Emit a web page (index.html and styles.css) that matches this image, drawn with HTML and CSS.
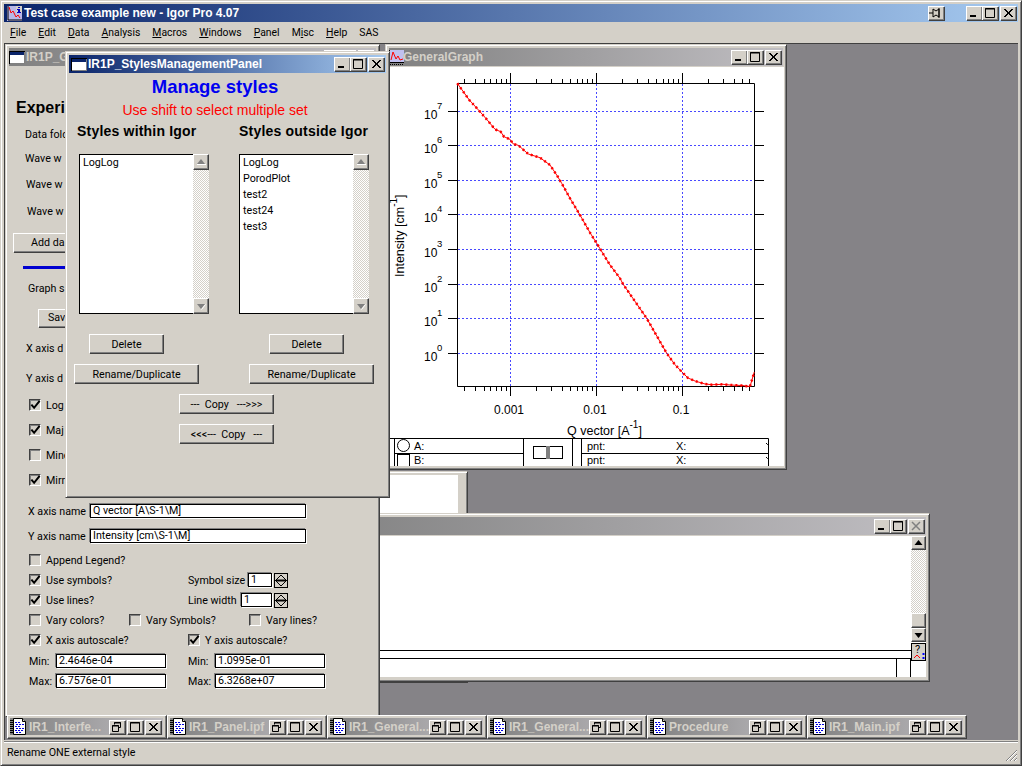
FILE: index.html
```html
<!DOCTYPE html>
<html lang="en">
<head>
    <meta charset="UTF-8">
    <title>Test case example new - Igor Pro 4.07</title>
    <link rel="stylesheet" href="styles.css">
</head>
<body>
<svg class="sprites" width="0" height="0">
    <symbol id="g-min" viewBox="0 0 16 14"><rect x="4" y="9" width="6" height="2" fill="#000"/></symbol>
    <symbol id="g-max" viewBox="0 0 16 14"><path d="M3.5 2.5h9v9h-9z M3 3h10" fill="none" stroke="#000"/></symbol>
    <symbol id="g-close" viewBox="0 0 16 14"><path d="M4 3l8 8M5 3l8 8M12 3l-8 8M13 3l-8 8" fill="none" stroke="#000"/></symbol>
    <symbol id="g-close-off" viewBox="0 0 16 14"><path d="M4 3l8 8M12 3l-8 8" fill="none" stroke="#808080" stroke-width="1.5"/></symbol>
    <symbol id="g-rest" viewBox="0 0 16 14"><path d="M5.5 2.5h6v5h-2M5.5 2.5v2M5 3h7M3.5 5.5h6v6h-6z M3 6h7" fill="none" stroke="#000"/></symbol>
    <symbol id="g-pin" viewBox="0 0 16 14"><path d="M1 7h4M5 3v8M5 3l3 2 3-2v8l-3-2-3 2" fill="none" stroke="#000"/><path d="M11 2v10" stroke="#000"/></symbol>
    <symbol id="i-app" viewBox="0 0 15 15">
        <rect width="15" height="15" fill="#b8b8e8"/>
        <path d="M1 0v14h14" fill="none" stroke="#000"/>
        <path d="M2 1l2 6 2-2 3 6 2-2 2 3" fill="none" stroke="#f00"/>
        <rect x="9" y="0" width="6" height="7" fill="#d4d0c8"/>
        <path d="M11 1h2v1h-2zM10 3h3v3h1v1h-4v-1h1v-2h-1z" fill="#0000c0"/>
    </symbol>
    <symbol id="i-panel" viewBox="0 0 16 13">
        <rect x=".5" y=".5" width="15" height="12" fill="#fff" stroke="#000"/>
        <rect x="1" y="1" width="14" height="3" fill="#0a246a"/>
        <path d="M15.5 1v12M1 12.5h15" stroke="#808080"/>
    </symbol>
    <symbol id="i-graph" viewBox="0 0 15 15">
        <rect width="15" height="13" fill="#c0c0f0"/>
        <path d="M0.5 0v13M0 12.5h15" stroke="#000"/>
        <path d="M2 10l2-8 3 7 2-3 2 4 3-1" fill="none" stroke="#f00"/>
        <path d="M1 14.5h14" stroke="#000" stroke-dasharray="1 1"/>
    </symbol>
    <symbol id="i-note" viewBox="0 0 16 17">
        <path d="M3.5 .5h9l3 3v13h-12z" fill="#fff" stroke="#000"/>
        <path d="M12.5 .5v3h3" fill="#d4d0c8" stroke="#000"/>
        <path d="M0 2.5h4M0 4.5h4M0 6.5h4M0 8.5h4M0 10.5h4M0 12.5h4M0 14.5h4" stroke="#000"/>
        <path d="M5 4.5h6M6 6.5h8M5 8.5h5M6 10.5h8M5 12.5h8M6 14.5h5" stroke="#0000e0" stroke-dasharray="2 1"/>
    </symbol>
    <symbol id="a-up" viewBox="0 0 16 16"><path d="M8 5l4 5H4z" fill="#808080"/><path d="M4 10.5h9" stroke="#fff"/></symbol>
    <symbol id="a-down" viewBox="0 0 16 16"><path d="M8 11L4 6h8z" fill="#808080"/><path d="M8.5 11.5l4-5" stroke="#fff"/></symbol>
    <symbol id="a-up-on" viewBox="0 0 15 14"><path d="M7.5 4l4 5h-8z" fill="#000"/></symbol>
    <symbol id="a-down-on" viewBox="0 0 15 14"><path d="M7.5 10l-4-5h8z" fill="#000"/></symbol>
    <symbol id="i-check" viewBox="0 0 12 12"><path d="M1.500 5l3 3.500L10.500 1" fill="none" stroke="#000" stroke-width="2.200"/></symbol>
    <symbol id="i-spin" viewBox="0 0 14 15">
        <rect x=".5" y=".5" width="13" height="14" fill="#d4d0c8" stroke="#000"/>
        <path d="M7 2l5 5H2zM7 13l5-5H2z" fill="none" stroke="#000"/>
        <path d="M1 7.500h12" stroke="#000"/>
    </symbol>
    <symbol id="i-help" viewBox="0 0 15 17">
        <path d="M2 14l3-3 3 3" fill="none" stroke="#f00"/>
        <path d="M11.500 9v2M11.500 13v2" stroke="#00f" stroke-width="2"/>
    </symbol>
    <symbol id="i-grip" viewBox="0 0 13 13">
        <path d="M12 1L1 12M12 5l-7 7M12 9l-3 3" stroke="#808080" fill="none"/>
        <path d="M12 2L2 12M12 6l-6 6M12 10l-2 2" stroke="#fff" fill="none"/>
    </symbol>
</svg>

<div class="app">
    <header class="app-title">
        <svg class="ico-app"><use href="#i-app"/></svg>
        <span class="app-name">Test case example new - Igor Pro 4.07</span>
        <span class="wb pin"><svg><use href="#g-pin"/></svg></span>
        <span class="wb"><svg><use href="#g-min"/></svg></span>
        <span class="wb"><svg><use href="#g-max"/></svg></span>
        <span class="wb closer"><svg><use href="#g-close"/></svg></span>
    </header>

    <nav class="menu">
        <span><u>F</u>ile</span>
        <span><u>E</u>dit</span>
        <span><u>D</u>ata</span>
        <span><u>A</u>nalysis</span>
        <span><u>M</u>acros</span>
        <span><u>W</u>indows</span>
        <span><u>P</u>anel</span>
        <span>M<u>i</u>sc</span>
        <span><u>H</u>elp</span>
        <span>SAS</span>
    </nav>

    <main class="desktop">
        <!-- window mostly hidden behind the others -->
        <section class="win win-back">
            <div class="back-page"></div>
        </section>

        <!-- history window -->
        <section class="win win-history">
            <div class="title inactive">
                <span class="title-text"></span>
                <span class="wb"><svg><use href="#g-min"/></svg></span>
                <span class="wb"><svg><use href="#g-max"/></svg></span>
                <span class="wb closer"><svg><use href="#g-close-off"/></svg></span>
            </div>
            <div class="hist-body">
                <div class="hist-main">
                    <div class="hist-area"></div>
                    <div class="hist-cmd"></div>
                    <div class="hist-foot"><span class="hist-cell"></span></div>
                </div>
                <div class="hist-bar">
                    <span class="sb-btn"><svg><use href="#a-up-on"/></svg></span>
                    <span class="track"></span>
                    <span class="sb-btn thumb"></span>
                    <span class="sb-btn"><svg><use href="#a-down-on"/></svg></span>
                    <span class="help-btn">?<svg><use href="#i-help"/></svg></span>
                </div>
            </div>
        </section>

        <!-- graph -->
        <section class="win win-graph">
            <div class="title inactive">
                <svg class="ico-graph"><use href="#i-graph"/></svg>
                <span class="title-text">GeneralGraph</span>
                <span class="wb"><svg><use href="#g-min"/></svg></span>
                <span class="wb"><svg><use href="#g-max"/></svg></span>
                <span class="wb closer"><svg><use href="#g-close"/></svg></span>
            </div>
            <svg class="plot" viewBox="389 67 395 399" width="395" height="399">
                <rect x="389" y="67" width="395" height="399" fill="#fff"/>
                <path class="grid" d="M458 111.500H754M458 145.500H754M458 180.500H754M458 214.500H754M458 249.500H754M458 284.500H754M458 318.500H754M458 353.500H754M510.500 84V386M596.500 84V386M682.500 84V386"/>
                <!-- log ticks, top and bottom -->
                <path class="axis" d="M458 83.500H754.500V386.500H457.500V83M448 111.500H458M448 145.500H458M448 180.500H458M448 214.500H458M448 249.500H458M448 284.500H458M448 318.500H458M448 353.500H458M754 111.500H764M754 145.500H764M754 180.500H764M754 214.500H764M754 249.500H764M754 284.500H764M754 318.500H764M754 353.500H764"/>
                <path class="axis" d="M510.500 73V83M596.500 73V83M682.500 73V83M510.500 387V396M596.500 387V396M682.500 387V396"/>
                <path class="axis" d="M464.500 79V83M475.500 79V83M484.500 79V83M490.500 79V83M496.500 79V83M501.500 79V83M506.500 79V83M536.500 79V83M551.500 79V83M562.500 79V83M570.500 79V83M577.500 79V83M582.500 79V83M587.500 79V83M592.500 79V83M622.500 79V83M637.500 79V83M648.500 79V83M656.500 79V83M663.500 79V83M668.500 79V83M673.500 79V83M678.500 79V83M708.500 79V83M723.500 79V83M734.500 79V83M742.500 79V83M749.500 79V83"/>
                <path class="axis" d="M464.500 387V391M475.500 387V391M484.500 387V391M490.500 387V391M496.500 387V391M501.500 387V391M506.500 387V391M536.500 387V391M551.500 387V391M562.500 387V391M570.500 387V391M577.500 387V391M582.500 387V391M587.500 387V391M592.500 387V391M622.500 387V391M637.500 387V391M648.500 387V391M656.500 387V391M663.500 387V391M668.500 387V391M673.500 387V391M678.500 387V391M708.500 387V391M723.500 387V391M734.500 387V391M742.500 387V391M749.500 387V391"/>
                <polyline class="curve" points="457.3,83.3 469.3,100 480,111.700 486.700,119.300 495,129.300 500.700,131.700 504,136.700 510,139.300 513.300,144 518.300,145.300 528.300,154 540,157.700 550,165 556.700,175 561.700,183.300 570,198.300 580,215 590,232.700 596.700,243.300 610,265 620,278.300 623,284 646.700,318.300 666.700,353.300 675,364.700 681.700,371.700 688,378 695,381 705,384 712,384.700 723,384.300 730,385 742,385.500 750,386.500 754.300,372"/>
                <polyline class="curve dots" points="457.3,83.3 469.3,100 480,111.700 486.700,119.300 495,129.300 500.700,131.700 504,136.700 510,139.300 513.300,144 518.300,145.300 528.300,154 540,157.700 550,165 556.700,175 561.700,183.300 570,198.300 580,215 590,232.700 596.700,243.300 610,265 620,278.300 623,284 646.700,318.300 666.700,353.300 675,364.700 681.700,371.700 688,378 695,381 705,384 712,384.700 723,384.300 730,385 742,385.500 750,386.500 754.300,372"/>

                <g class="ylab">
                    <text x="424" y="119">10</text><text class="sup" x="437" y="109">7</text>
                    <text x="424" y="153">10</text><text class="sup" x="437" y="143">6</text>
                    <text x="424" y="188">10</text><text class="sup" x="437" y="178">5</text>
                    <text x="424" y="222">10</text><text class="sup" x="437" y="212">4</text>
                    <text x="424" y="257">10</text><text class="sup" x="437" y="247">3</text>
                    <text x="424" y="292">10</text><text class="sup" x="437" y="282">2</text>
                    <text x="424" y="326">10</text><text class="sup" x="437" y="316">1</text>
                    <text x="424" y="361">10</text><text class="sup" x="437" y="351">0</text>
                </g>
                <g class="xlab">
                    <text x="509" y="414">0.001</text>
                    <text x="595" y="414">0.01</text>
                    <text x="681" y="414">0.1</text>
                </g>
                <text class="axis-name" x="567" y="435">Q vector [A<tspan class="sup" dy="-7">-1</tspan><tspan dy="7">]</tspan></text>
                <text class="axis-name" transform="translate(404 277) rotate(-90)">Intensity [cm<tspan class="sup" dy="-7">-1</tspan><tspan dy="7">]</tspan></text>

                <!-- cursor info bar -->
                <path class="axis" d="M389 438.500H768.500V466M389 466.500H768.500M394.500 438V466M523.500 438V466M572.500 438V466M581.500 438V466M394 453.500H523.500M581.500 453.500H768.500"/>
                <path class="axis" d="M766 443l1.500 1.500 1.500-1.500M766 457l1.500 1.500 1.500-1.500"/>
                <circle class="axis" cx="403.500" cy="445.500" r="6"/>
                <rect class="axis" x="397.500" y="454.500" width="12" height="12"/>
                <rect class="axis" x="533.500" y="446.500" width="29" height="12"/>
                <rect x="546" y="446" width="4" height="13" fill="#808080"/>
                <g class="cur">
                    <text x="414" y="450">A:</text><text x="414" y="464">B:</text>
                    <text x="587" y="450">pnt:</text><text x="676" y="450">X:</text>
                    <text x="587" y="464">pnt:</text><text x="676" y="464">X:</text>
                </g>
            </svg>
        </section>

        <!-- big control panel on the left -->
        <section class="win win-panel">
            <div class="title inactive">
                <svg class="ico-panel"><use href="#i-panel"/></svg>
                <span class="title-text">IR1P_G</span>
                <span class="wb"><svg><use href="#g-min"/></svg></span>
                <span class="wb"><svg><use href="#g-max"/></svg></span>
                <span class="wb closer"><svg><use href="#g-close"/></svg></span>
            </div>
            <div class="panel-body">
                <div class="row big mt-31 ml-7">Experi</div>
                <div class="row mt-8 ml-16">Data fold</div>
                <div class="row mt-8 ml-16">Wave w</div>
                <div class="row mt-10 ml-17">Wave w</div>
                <div class="row mt-11 ml-18">Wave w</div>
                <div class="btn btn-add mt-14 ml-4">Add da</div>
                <div class="blue-line mt-14 ml-14"></div>
                <div class="row mt-11 ml-19">Graph s</div>
                <div class="btn btn-save mt-13 ml-29">Sav</div>
                <div class="row mt-13 ml-17">X axis d</div>
                <div class="row mt-14 ml-17">Y axis d</div>
                <label class="row chk mt-11 ml-20"><span class="box"><svg><use href="#i-check"/></svg></span>Log</label>
                <label class="row chk mt-9 ml-20"><span class="box"><svg><use href="#i-check"/></svg></span>Maj</label>
                <label class="row chk mt-9 ml-20"><span class="box"></span>Mino</label>
                <label class="row chk mt-9 ml-20"><span class="box"><svg><use href="#i-check"/></svg></span>Mirr</label>

                <div class="row mt-15 ml-19"><span class="lab-name">X axis name</span><span class="field f-name">Q vector [A\S-1\M]</span></div>
                <div class="row mt-9 ml-19"><span class="lab-name">Y axis name</span><span class="field f-name">Intensity [cm\S-1\M]</span></div>

                <label class="row chk mt-8 ml-20"><span class="box"></span>Append Legend?</label>
                <div class="row mt-4 ml-20">
                    <label class="chk col-a"><span class="box"><svg><use href="#i-check"/></svg></span>Use symbols?</label>
                    <span class="lab-size">Symbol size</span><span class="field f-size">1</span>
                    <svg class="spin"><use href="#i-spin"/></svg>
                </div>
                <div class="row mt-4 ml-20">
                    <label class="chk col-a"><span class="box"><svg><use href="#i-check"/></svg></span>Use lines?</label>
                    <span class="lab-width">Line width</span><span class="field f-width">1</span>
                    <svg class="spin"><use href="#i-spin"/></svg>
                </div>
                <div class="row mt-4 ml-20">
                    <label class="chk col-v1"><span class="box"></span>Vary colors?</label>
                    <label class="chk col-v2"><span class="box"></span>Vary Symbols?</label>
                    <label class="chk"><span class="box"></span>Vary lines?</label>
                </div>
                <div class="row mt-4 ml-20">
                    <label class="chk col-a"><span class="box"><svg><use href="#i-check"/></svg></span>X axis autoscale?</label>
                    <label class="chk"><span class="box"><svg><use href="#i-check"/></svg></span>Y axis autoscale?</label>
                </div>
                <div class="row mt-5 ml-20">
                    <span class="lab-min">Min:</span><span class="field f-num">2.4646e-04</span>
                    <span class="lab-min ml-22">Min:</span><span class="field f-num">1.0995e-01</span>
                </div>
                <div class="row mt-4 ml-20">
                    <span class="lab-min">Max:</span><span class="field f-num">6.7576e-01</span>
                    <span class="lab-min ml-22">Max:</span><span class="field f-num">6.3268e+07</span>
                </div>
            </div>
        </section>

        <!-- minimised procedure windows -->
        <div class="strip">
            <div class="mini"><div class="mini-in"><svg class="ico-note"><use href="#i-note"/></svg><span class="mini-name">IR1_Interfe...</span><span class="wb"><svg><use href="#g-rest"/></svg></span><span class="wb"><svg><use href="#g-max"/></svg></span><span class="wb closer"><svg><use href="#g-close"/></svg></span></div></div>
            <div class="mini"><div class="mini-in"><svg class="ico-note"><use href="#i-note"/></svg><span class="mini-name">IR1_Panel.ipf</span><span class="wb"><svg><use href="#g-rest"/></svg></span><span class="wb"><svg><use href="#g-max"/></svg></span><span class="wb closer"><svg><use href="#g-close"/></svg></span></div></div>
            <div class="mini"><div class="mini-in"><svg class="ico-note"><use href="#i-note"/></svg><span class="mini-name">IR1_General...</span><span class="wb"><svg><use href="#g-rest"/></svg></span><span class="wb"><svg><use href="#g-max"/></svg></span><span class="wb closer"><svg><use href="#g-close"/></svg></span></div></div>
            <div class="mini"><div class="mini-in"><svg class="ico-note"><use href="#i-note"/></svg><span class="mini-name">IR1_General...</span><span class="wb"><svg><use href="#g-rest"/></svg></span><span class="wb"><svg><use href="#g-max"/></svg></span><span class="wb closer"><svg><use href="#g-close"/></svg></span></div></div>
            <div class="mini"><div class="mini-in"><svg class="ico-note"><use href="#i-note"/></svg><span class="mini-name">Procedure</span><span class="wb"><svg><use href="#g-rest"/></svg></span><span class="wb"><svg><use href="#g-max"/></svg></span><span class="wb closer"><svg><use href="#g-close"/></svg></span></div></div>
            <div class="mini"><div class="mini-in"><svg class="ico-note"><use href="#i-note"/></svg><span class="mini-name">IR1_Main.ipf</span><span class="wb"><svg><use href="#g-rest"/></svg></span><span class="wb"><svg><use href="#g-max"/></svg></span><span class="wb closer"><svg><use href="#g-close"/></svg></span></div></div>
        </div>

        <!-- the active dialog -->
        <section class="win win-styles">
            <div class="title active">
                <svg class="ico-panel"><use href="#i-panel"/></svg>
                <span class="title-text">IR1P_StylesManagementPanel</span>
                <span class="wb"><svg><use href="#g-min"/></svg></span>
                <span class="wb"><svg><use href="#g-max"/></svg></span>
                <span class="wb closer"><svg><use href="#g-close"/></svg></span>
            </div>
            <div class="styles-body">
                <h1 class="manage">Manage styles</h1>
                <p class="hint">Use shift to select multiple set</p>
                <div class="pair heads">
                    <h2>Styles within Igor</h2>
                    <h2>Styles outside Igor</h2>
                </div>
                <div class="pair lists">
                    <div class="list">
                        <ul><li>LogLog</li></ul>
                        <div class="list-bar">
                            <span class="sb-btn big-btn"><svg><use href="#a-up"/></svg></span>
                            <span class="track"></span>
                            <span class="sb-btn big-btn"><svg><use href="#a-down"/></svg></span>
                        </div>
                    </div>
                    <div class="list">
                        <ul><li>LogLog</li><li>PorodPlot</li><li>test2</li><li>test24</li><li>test3</li></ul>
                        <div class="list-bar">
                            <span class="sb-btn big-btn"><svg><use href="#a-up"/></svg></span>
                            <span class="track"></span>
                            <span class="sb-btn big-btn"><svg><use href="#a-down"/></svg></span>
                        </div>
                    </div>
                </div>
                <div class="pair dels">
                    <button class="btn">Delete</button>
                    <button class="btn">Delete</button>
                </div>
                <div class="pair renames">
                    <button class="btn">Rename/Duplicate</button>
                    <button class="btn">Rename/Duplicate</button>
                </div>
                <button class="btn copy">---  Copy   --->>></button>
                <button class="btn copy">&lt;&lt;&lt;---  Copy   ---</button>
            </div>
        </section>
    </main>

    <footer class="status">
        <span>Rename ONE external style</span>
        <svg class="grip"><use href="#i-grip"/></svg>
    </footer>
</div>
</body>
</html>
```

FILE: styles.css
```css
* {
    box-sizing: border-box;
}

html, body {
    margin: 0;
    padding: 0;
}

body {
    width: 1022px;
    height: 766px;
    overflow: hidden;
    background-color: #d4d0c8;
    font-family: Roboto, "Liberation Sans", Arial, sans-serif;
    font-size: 10.700px;
    color: #000;
}

.sprites {
    position: absolute;
}

/* main application frame */
.app {
    width: 1022px;
    height: 766px;
    padding: 3px;
    display: flex;
    flex-direction: column;
    border: 1px solid;
    border-color: #d4d0c8 #404040 #404040 #d4d0c8;
    box-shadow: inset 1px 1px #fff, inset -1px -1px #808080;
}

.app-title {
    height: 18px;
    flex: none;
    display: flex;
    align-items: center;
    padding: 0 2px 0 3px;
    background: linear-gradient(to right, #0a246a, #a6caf0);
}

.ico-app {
    width: 15px;
    height: 15px;
    flex: none;
}

.app-name {
    flex: 1;
    margin-left: 2px;
    color: #fff;
    font-family: "Liberation Sans", Arial, sans-serif;
    font-weight: bold;
    font-size: 12px;
    white-space: nowrap;
}

.pin {
    margin-right: 22px;
}

.menu {
    height: 21px;
    flex: none;
    display: flex;
    align-items: center;
    gap: 12px;
    padding: 0 5px 0 6px;
    font-size: 10.400px;
}

/* MDI client area */
.desktop {
    position: relative;
    flex: 1;
    background-color: #858387;
    overflow: hidden;
    box-shadow: inset 1px 1px #404040;
}

.win {
    position: absolute;
    display: flex;
    flex-direction: column;
    padding: 3px;
    background-color: #d4d0c8;
    border: 1px solid;
    border-color: #d4d0c8 #404040 #404040 #d4d0c8;
    box-shadow: inset 1px 1px #fff, inset -1px -1px #808080;
}

.win-back {
    left: 296px;
    top: 428px;
    width: 168px;
    height: 212px;
    padding: 3px 9px 0 0;
}

.back-page {
    flex: 1;
    background-color: #fff;
}

.win-history {
    left: 296px;
    top: 470px;
    width: 630px;
    height: 169px;
}

.win-graph {
    left: 381px;
    top: 1px;
    width: 402px;
    height: 426px;
}

.win-panel {
    left: 1px;
    top: 1px;
    width: 375px;
    height: 673px;
}

.win-styles {
    left: 61px;
    top: 8px;
    width: 325px;
    height: 447px;
}

/* title bars */
.title {
    height: 18px;
    flex: none;
    display: flex;
    align-items: center;
    padding: 0 2px;
    margin-bottom: 1px;
}

.title.active {
    background: linear-gradient(to right, #0a246a, #a6caf0);
}

.title.inactive {
    background: linear-gradient(to right, #808080, #c0bec2);
}

.title-text {
    flex: 1;
    margin-left: 1px;
    font-family: "Liberation Sans", Arial, sans-serif;
    font-weight: bold;
    font-size: 12px;
    color: #d4d0c8;
    white-space: nowrap;
    overflow: hidden;
}

.active .title-text {
    color: #fff;
}

.win-graph .title,
.win-panel .title {
    padding-left: 0;
}

.win-graph .title-text {
    margin-left: -1px;
}

.ico-panel {
    width: 16px;
    height: 13px;
    flex: none;
}

.ico-graph {
    width: 15px;
    height: 15px;
    flex: none;
}

/* caption buttons */
.wb {
    width: 16px;
    height: 14px;
    flex: none;
    display: block;
    background-color: #d4d0c8;
    border-top: 1px solid #fff;
    border-left: 1px solid #fff;
    box-shadow: 1px 1px #404040, inset -1px -1px #808080;
}

.wb svg {
    display: block;
    width: 16px;
    height: 14px;
    margin: -1px 0 0 -1px;
}

.closer {
    margin-left: 2px;
}

/* history */
.hist-body {
    flex: 1;
    display: flex;
    background-color: #fff;
    margin-bottom: 1px;
}

.hist-main {
    flex: 1;
    display: flex;
    flex-direction: column;
}

.hist-area {
    height: 115px;
    border-bottom: 1px solid #000;
}

.hist-cmd {
    height: 8px;
    border-bottom: 1px solid #000;
}

.hist-foot {
    flex: 1;
    display: flex;
    justify-content: flex-end;
}

.hist-cell {
    width: 15px;
    border-left: 1px solid #000;
    border-right: 1px solid #000;
}

.hist-bar {
    width: 15px;
    margin-right: 0;
    display: flex;
    flex-direction: column;
    flex: none;
    background-color: #fff;
}

.sb-btn {
    display: block;
    height: 14px;
    flex: none;
    background-color: #d4d0c8;
    border-top: 1px solid #fff;
    border-left: 1px solid #fff;
    box-shadow: inset -1px -1px #808080;
    border-bottom: 1px solid #404040;
    border-right: 1px solid #404040;
}

.sb-btn svg {
    display: block;
    width: 15px;
    height: 14px;
    margin: -1px 0 0 -1px;
}

.big-btn {
    height: 16px;
}

.big-btn svg {
    width: 16px;
    height: 16px;
}

.track {
    display: block;
    flex: 1;
    background: repeating-conic-gradient(#d4d0c8 0 25%, #fff 0 50%) 0 0 / 2px 2px;
}

.hist-bar .track {
    flex: none;
    height: 63px;
}

.thumb {
    height: 15px;
}

.help-btn {
    position: relative;
    display: block;
    height: 18px;
    flex: none;
    margin-top: 1px;
    padding-left: 3px;
    font-size: 11px;
    line-height: 11px;
    background-color: #d4d0c8;
    border: 1px solid #000;
}

.help-btn svg {
    position: absolute;
    left: 0;
    top: 0;
    width: 15px;
    height: 17px;
}

/* graph */
.plot {
    display: block;
    font-family: "Liberation Sans", Arial, sans-serif;
}

.grid {
    fill: none;
    stroke: #4848ff;
    stroke-width: 1;
    stroke-dasharray: 2 2;
    shape-rendering: crispEdges;
}

.axis {
    fill: none;
    stroke: #000;
    stroke-width: 1;
}

.curve {
    fill: none;
    stroke: #f00;
    stroke-width: 1;
}

.curve.dots {
    stroke-width: 2.5;
    stroke-dasharray: 2 3;
}

.ylab text {
    font-size: 12px;
}

.ylab .sup {
    font-size: 9.500px;
}

.xlab text {
    font-size: 12px;
    text-anchor: middle;
}

.axis-name {
    font-size: 12.500px;
}

.axis-name .sup {
    font-size: 10px;
}

.cur text {
    font-size: 11px;
}

/* panel rows */
.panel-body {
    flex: 1;
    display: flex;
    flex-direction: column;
    align-items: flex-start;
}

.row {
    display: flex;
    align-items: center;
    height: 16px;
    flex: none;
    white-space: nowrap;
}

.big {
    height: 20px;
    font-family: "Liberation Sans", Arial, sans-serif;
    font-size: 16px;
    font-weight: bold;
}

.chk {
    display: flex;
    align-items: center;
    white-space: nowrap;
}

.box {
    width: 12px;
    height: 12px;
    flex: none;
    margin-right: 5px;
    border: 1px solid;
    border-color: #404040 #fff #fff #404040;
    background-color: #d4d0c8;
    box-shadow: 1px 1px #808080 inset;
}

.box svg {
    display: block;
    width: 11px;
    height: 11px;
}

.col-a {
    width: 159px;
}

.col-v1 {
    width: 100px;
}

.col-v2 {
    width: 120px;
}

.field {
    display: block;
    height: 14px;
    line-height: 12px;
    padding-left: 2px;
    background-color: #fff;
    border: 1px solid #000;
    box-shadow: -1px -1px #808080, 1px 1px #fff;
    white-space: nowrap;
}

.f-name {
    width: 216px;
}

.f-size {
    width: 24px;
}

.f-width {
    width: 31px;
}

.f-num {
    width: 110px;
}

.lab-name {
    width: 62px;
}

.lab-size {
    width: 60px;
}

.lab-width {
    width: 53px;
}

.lab-min {
    width: 27px;
}

.spin {
    width: 14px;
    height: 15px;
    margin-left: 2px;
}

.blue-line {
    width: 60px;
    height: 3px;
    flex: none;
    background-color: #0000d0;
}

.btn {
    display: block;
    padding: 0;
    font: inherit;
    color: #000;
    text-align: center;
    white-space: pre;
    background-color: #d4d0c8;
    border: 0;
    border-top: 1px solid #fff;
    border-left: 1px solid #fff;
    box-shadow: 1px 1px #404040, inset -1px -1px #808080;
}

.btn-add {
    width: 90px;
    height: 19px;
    flex: none;
    line-height: 17px;
    text-align: left;
    padding-left: 17px;
}

.btn-save {
    width: 60px;
    height: 18px;
    flex: none;
    line-height: 16px;
    text-align: left;
    padding-left: 9px;
}

/* spacing helpers for the hand-placed panel rows */
.mt-4 { margin-top: 4px; }
.mt-5 { margin-top: 5px; }
.mt-8 { margin-top: 8px; }
.mt-9 { margin-top: 9px; }
.mt-10 { margin-top: 10px; }
.mt-11 { margin-top: 11px; }
.mt-13 { margin-top: 13px; }
.mt-14 { margin-top: 14px; }
.mt-15 { margin-top: 15px; }
.mt-31 { margin-top: 31px; }
.ml-4 { margin-left: 4px; }
.ml-7 { margin-left: 7px; }
.ml-14 { margin-left: 14px; }
.ml-16 { margin-left: 16px; }
.ml-17 { margin-left: 17px; }
.ml-18 { margin-left: 18px; }
.ml-19 { margin-left: 19px; }
.ml-20 { margin-left: 20px; }
.ml-22 { margin-left: 22px; }
.ml-29 { margin-left: 29px; }

/* minimised windows */
.strip {
    position: absolute;
    left: 3px;
    top: 672px;
    display: flex;
    gap: 1px;
}

.mini {
    width: 159px;
    height: 23px;
    padding: 2px 3px 3px 2px;
    background-color: #d4d0c8;
    border-top: 1px solid #fff;
    border-left: 1px solid #fff;
    box-shadow: 1px 1px #404040, inset -1px -1px #808080;
}

.mini-in {
    height: 17px;
    display: flex;
    align-items: center;
    padding-right: 0;
    background: linear-gradient(to right, #808080, #c0bec2);
}

.mini-in .wb {
    margin-right: 2px;
}

.mini-in .closer {
    margin-left: 0;
}

.ico-note {
    width: 16px;
    height: 17px;
    flex: none;
}

.mini-name {
    flex: 1;
    margin-left: 3px;
    font-family: "Liberation Sans", Arial, sans-serif;
    font-weight: bold;
    font-size: 12px;
    color: #d4d0c8;
    white-space: nowrap;
    overflow: hidden;
}

/* styles dialog */
.styles-body {
    display: flex;
    flex-direction: column;
    align-items: flex-start;
    flex: 1;
}

.manage {
    width: 292px;
    height: 26px;
    margin: 0;
    font-family: "Liberation Sans", Arial, sans-serif;
    font-size: 18.500px;
    line-height: 26px;
    font-weight: bold;
    text-align: center;
    color: #0000f0;
}

.hint {
    width: 292px;
    height: 20px;
    margin: 0;
    font-family: "Liberation Sans", Arial, sans-serif;
    font-size: 14px;
    line-height: 20px;
    text-align: center;
    color: #f00;
}

.pair {
    display: flex;
    flex: none;
}

.heads {
    margin-top: 3px;
    height: 16px;
    padding-left: 8px;
    gap: 42px;
}

.heads h2 {
    width: 120px;
    margin: 0;
    font-family: "Liberation Sans", Arial, sans-serif;
    font-size: 14px;
    line-height: 16px;
    font-weight: bold;
    letter-spacing: .2px;
    white-space: nowrap;
}

.lists {
    margin-top: 15px;
    padding-left: 10px;
    gap: 30px;
}

.list {
    width: 130px;
    height: 160px;
    display: flex;
    background-color: #fff;
    border: 1px solid #000;
    border-right: 0;
}

.list ul {
    flex: 1;
    margin: 0;
    padding: 0 0 0 3px;
    list-style: none;
}

.list li {
    height: 16px;
    line-height: 16px;
}

.list-bar {
    width: 16px;
    flex: none;
    display: flex;
    flex-direction: column;
    margin-top: -1px;
    margin-bottom: -1px;
}

.dels {
    margin-top: 20px;
    padding-left: 20px;
    gap: 106px;
}

.dels .btn {
    width: 74px;
    height: 19px;
}

.renames {
    margin-top: 11px;
    padding-left: 5px;
    gap: 51px;
}

.renames .btn {
    width: 124px;
    height: 19px;
}

.copy {
    width: 94px;
    height: 19px;
    margin-top: 11px;
    margin-left: 110px;
}

/* status bar */
.status {
    height: 21px;
    flex: none;
    margin-top: 1px;
    padding-left: 3px;
    display: flex;
    align-items: center;
    justify-content: space-between;
    border-top: 1px solid #808080;
    box-shadow: inset 0 1px #fff;
}

.grip {
    width: 13px;
    height: 13px;
    align-self: flex-end;
}
```
